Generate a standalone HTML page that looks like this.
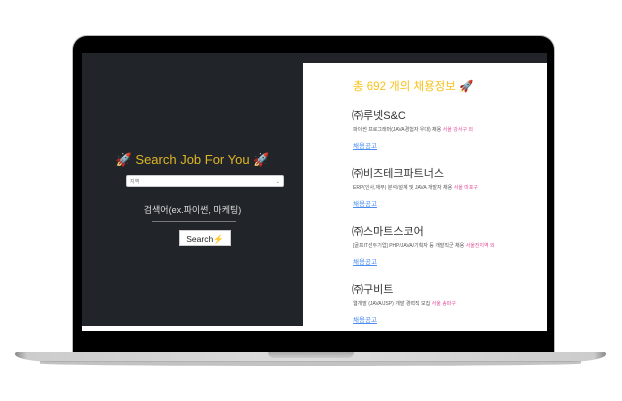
<!DOCTYPE html>
<html><head><meta charset="utf-8"><style>
body{margin:0;width:622px;height:401px;background:#fff;position:relative;overflow:hidden;font-family:"Liberation Sans","Noto Sans CJK KR",sans-serif}
.abs{position:absolute;white-space:nowrap}
.lid{left:73px;top:36px;width:481px;height:320px;background:#000;border-radius:14px 14px 0 0;box-shadow:0 0 0 1px #bbb}
.base{left:15px;top:352px;width:591px;height:10px;background:linear-gradient(90deg,#888 0,#ccc 2%,#ddd 50%,#ccc 98%,#888 100%);border-radius:2px 2px 40px 40px/2px 2px 8px 8px}
.shadow{left:40px;top:361px;width:541px;height:5px;background:#999;border-radius:0 0 50% 50%;opacity:.6}
.notch{left:268px;top:352px;width:86px;height:6px;background:linear-gradient(#aaa,#ccc);border-radius:0 0 6px 6px}
.dark{left:82px;top:53px;width:221px;height:273px;background:#212529}
.top{left:82px;top:53px;width:465px;height:10px;background:#212529}
.white{left:303px;top:63px;width:244px;height:268px;background:#fff}
.wstrip{left:82px;top:326px;width:222px;height:5px;background:#fff}
.title{left:82px;width:221px;top:152px;text-align:center;color:#e0b526;font-size:13px}
.sel{left:126px;top:175px;width:158px;height:12px;background:#fff;border:1px solid #ccc;border-radius:2px;font-size:5px;color:#777;line-height:12px;padding-left:3px;box-sizing:border-box}
.kw{left:82px;width:221px;top:203px;text-align:center;color:#ddd;font-size:9px}
.line{left:152px;top:221px;width:84px;height:1px;background:#777}
.btn{left:179px;top:230px;width:52px;height:16px;background:#fff;border:1px solid #ccc;font-size:8.5px;line-height:16px;text-align:center;box-sizing:border-box;color:#222}
.h{left:353px;top:78px;color:#f7c21b;font-size:11.5px}
.n{left:352px;color:#333;font-size:11px}
.d{left:353px;color:#555;font-size:5px}
.d span{color:#e0529c}
.l{left:353px;color:#4a8df0;font-size:6.5px;text-decoration:underline}
</style></head><body>
<div class="abs lid"></div>
<div class="abs base"></div><div class="abs shadow"></div><div class="abs notch"></div>
<div class="abs top"></div>
<div class="abs dark"></div>
<div class="abs white"></div>
<div class="abs wstrip"></div>
<div class="abs title">🚀 Search Job For You 🚀</div>
<div class="abs sel">지역<span style="float:right;padding-right:3px">⌄</span></div>
<div class="abs kw">검색어(ex.파이썬, 마케팅)</div>
<div class="abs line"></div>
<div class="abs btn">Search<span style="color:#e0b526">⚡</span></div>
<div class="abs h">총 692 개의 채용정보 🚀</div>
<div class="abs n" style="top:107px">㈜루넷S&amp;C</div>
<div class="abs d" style="top:126px">파이썬 프로그래머(JAVA경험자 우대) 채용 <span>서울 강서구 외</span></div>
<div class="abs l" style="top:140px">채용공고</div>
<div class="abs n" style="top:165px">㈜비즈테크파트너스</div>
<div class="abs d" style="top:184px">ERP(인사,재무) 분석/설계 및 JAVA 개발자 채용 <span>서울 마포구</span></div>
<div class="abs l" style="top:198px">채용공고</div>
<div class="abs n" style="top:223px">㈜스마트스코어</div>
<div class="abs d" style="top:242px">[골프IT선두기업] PHP/JAVA/기획자 등 개발직군 채용 <span>서울전지역 외</span></div>
<div class="abs l" style="top:256px">채용공고</div>
<div class="abs n" style="top:281px">㈜구비트</div>
<div class="abs d" style="top:300px">웹개발 (JAVA/JSP) 개발 경력직 모집 <span>서울 송파구</span></div>
<div class="abs l" style="top:314px">채용공고</div>
</body></html>
